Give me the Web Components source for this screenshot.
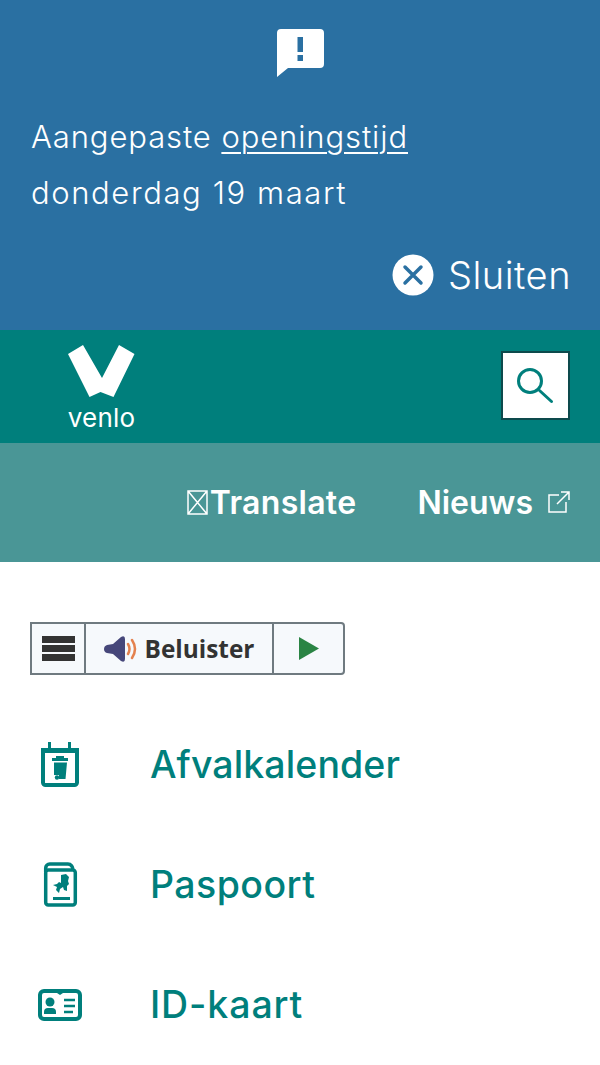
<!DOCTYPE html>
<html lang="nl">
<head>
<meta charset="utf-8">
<title>Venlo</title>
<style>
    html, body { margin: 0; padding: 0; background: #fff; }
    body { font-family: Inter, "Liberation Sans", sans-serif; width: 600px; height: 1065px; overflow: hidden; }
</style>
</head>
<body>
<venlo-alert>
    <a href="#">openingstijd</a>
</venlo-alert>
<venlo-header></venlo-header>
<venlo-nav></venlo-nav>
<venlo-readspeaker></venlo-readspeaker>
<venlo-tasks>
    <venlo-task label="Afvalkalender" icon="afval" tracking=".1"></venlo-task>
    <venlo-task label="Paspoort" icon="paspoort" tracking=".45"></venlo-task>
    <venlo-task label="ID-kaart" icon="id" tracking=".9"></venlo-task>
</venlo-tasks>

<script>
class VenloAlert extends HTMLElement {
    constructor() {
        super();
        this.attachShadow({mode: "open"});
        this.shadowRoot.innerHTML = `
            <style>
                :host { display: flex; flex-direction: column; height: 330px; box-sizing: border-box; padding: 29px 30px 0 31px; background: #2a70a2; color: #fff; }
                .icon { align-self: center; width: 50px; height: 50px; display: block; }
                p { margin: 30px 0 0; font-size: 31px; line-height: 56px; font-weight: 350; letter-spacing: .9px; }
                .second { letter-spacing: 1.6px; }
                ::slotted(a) { color: #fff; text-decoration: underline; text-underline-offset: 4px; text-decoration-thickness: 2px; }
                .close { display: flex; align-items: center; justify-content: flex-end; gap: 14px; margin-top: 33px; margin-right: -1px; font-size: 38px; line-height: 42px; font-weight: 350; letter-spacing: .5px; }
                .close svg { width: 42px; height: 42px; display: block; }
            </style>
            <svg class="icon" viewBox="0 0 50 50">
                <path fill="#fff" d="M5 0h39a4 4 0 0 1 4 4v31a4 4 0 0 1-4 4H12L1 48V4a4 4 0 0 1 4-4z"/>
                <rect x="21.500" y="8" width="5.500" height="15" fill="#2a70a2"/>
                <rect x="21.500" y="26" width="5.500" height="6" fill="#2a70a2"/>
            </svg>
            <p>Aangepaste <slot></slot><br><span class="second">donderdag 19 maart</span></p>
            <div class="close">
                <svg viewBox="0 0 42 42">
                    <circle cx="21" cy="21" r="20.500" fill="#fff"/>
                    <path d="M13 13l16 16M29 13L13 29" stroke="#2a70a2" stroke-width="3.500" stroke-linecap="round"/>
                </svg>
                <span>Sluiten</span>
            </div>
        `;
    }
}
customElements.define('venlo-alert', VenloAlert);

class VenloHeader extends HTMLElement {
    constructor() {
        super();
        this.attachShadow({mode: "open"});
        this.shadowRoot.innerHTML = `
            <style>
                :host { display: flex; align-items: flex-start; justify-content: space-between; height: 113px; box-sizing: border-box; padding: 15px 30px 0 67px; background: #007f7c; color: #fff; }
                .logo { display: flex; flex-direction: column; align-items: center; width: 69px; }
                .logo svg { width: 69px; height: 53px; display: block; }
                .logo span { font-size: 26px; line-height: 28px; margin-top: 6px; letter-spacing: .2px; font-weight: 400; }
                button { width: 69px; height: 69px; margin-top: 6px; padding: 0; box-sizing: border-box; background: #fff; border: 2px solid #0d4a4c; display: flex; align-items: center; justify-content: center; }
                button svg { width: 38px; height: 38px; display: block; }
            </style>
            <div class="logo">
                <svg viewBox="0 0 69 53">
                    <path fill="#fff" d="M1 9L16 0l19 33L52 0l15.500 9-21 43-13-5-11 5z"/>
                </svg>
                <span>venlo</span>
            </div>
            <button aria-label="Zoeken">
                <svg viewBox="0 0 38 38" fill="none" stroke="#007f7c" stroke-width="3" stroke-linecap="round">
                    <circle cx="13" cy="14" r="11.500"/>
                    <path d="M22.500 23.500l12 11"/>
                </svg>
            </button>
        `;
    }
}
customElements.define('venlo-header', VenloHeader);

class VenloNav extends HTMLElement {
    constructor() {
        super();
        this.attachShadow({mode: "open"});
        this.shadowRoot.innerHTML = `
            <style>
                :host { display: flex; align-items: center; justify-content: flex-end; height: 119px; box-sizing: border-box; padding: 0 30px 1px 0; background: #4a9696; color: #fff; font-size: 32px; font-weight: 600; }
                .item { display: flex; align-items: center; }
                .item + .item { margin-left: 61px; }
                .translate { letter-spacing: .3px; }
                .tofu { width: 21px; height: 25px; display: block; margin-right: 2px; }
                .ext { width: 22px; height: 22px; display: block; margin-left: 15px; }
            </style>
            <div class="item translate">
                <svg class="tofu" viewBox="0 0 21 25" fill="none" stroke="#fff" stroke-width="1.500"><path d="M1 1h19v23H1zM1 1l19 23M20 1L1 24"/></svg>
                <span>Translate</span>
            </div>
            <div class="item">
                <span>Nieuws</span>
                <svg class="ext" viewBox="0 0 22 22" fill="none" stroke="#fff" stroke-width="1.500"><path d="M11 4H1v17h17V11M9 13L21 1M13 1h8v8"/></svg>
            </div>
        `;
    }
}
customElements.define('venlo-nav', VenloNav);

class VenloReadspeaker extends HTMLElement {
    constructor() {
        super();
        this.attachShadow({mode: "open"});
        this.shadowRoot.innerHTML = `
            <style>
                :host { display: flex; width: 315px; height: 53px; box-sizing: border-box; margin: 60px 0 0 30px; background: #f6f9fc; border: 2px solid #6f7a80; border-radius: 0 4px 4px 0; color: #333; font-family: "Open Sans", sans-serif; }
                .cell { display: flex; align-items: center; justify-content: center; box-sizing: border-box; }
                .cell + .cell { border-left: 2px solid #6f7a80; }
                .menu { width: 52px; }
                .listen { width: 188px; font-size: 24.400px; font-weight: 700; gap: 8px; }
                .play { flex: 1; }
                svg { display: block; }
            </style>
            <div class="cell menu">
                <svg width="33" height="25" viewBox="0 0 33 25" fill="#333"><rect width="33" height="7"/><rect y="9" width="33" height="7"/><rect y="18" width="33" height="7"/></svg>
            </div>
            <div class="cell listen">
                <svg width="33" height="26" viewBox="0 0 33 26" fill="none">
                    <path fill="#46477a" d="M0 13q0-3 3-4l6-1 8-7q4-2 4 2v20q0 4-4 2l-8-7-6-1q-3-1-3-4z"/>
                    <path stroke="#e4814e" stroke-width="2.500" stroke-linecap="round" d="M24 8q3 5 0 10M28 4q6 9 0 18"/>
                </svg>
                <span>Beluister</span>
            </div>
            <div class="cell play">
                <svg width="20" height="23" viewBox="0 0 20 23"><path fill="#2a8444" d="M0 0l20 11.500L0 23z"/></svg>
            </div>
        `;
    }
}
customElements.define('venlo-readspeaker', VenloReadspeaker);

class VenloTasks extends HTMLElement {
    constructor() {
        super();
        this.attachShadow({mode: "open"});
        this.shadowRoot.innerHTML = `
            <style>
                :host { display: block; margin-top: 30px; }
            </style>
            <slot></slot>
        `;
    }
}
customElements.define('venlo-tasks', VenloTasks);

const TASK_ICONS = {
    afval: `<svg width="60" height="60" viewBox="0 0 60 60">
        <rect x="13" y="15" width="34" height="35" rx="2.500" fill="none" stroke="#007f7c" stroke-width="4"/>
        <path fill="#007f7c" d="M11 13h38v5H11zM18 7h3v8h-3zM38 7h3v8h-3z"/>
        <path fill="#007f7c" d="M26 21h8v2h-8zM22 23h16v3H22zM24 27.500h13l-1.500 16.500H29v-4h-5z"/>
        <circle cx="27" cy="42.500" r="2.200" fill="#007f7c"/>
    </svg>`,
    paspoort: `<svg width="60" height="60" viewBox="0 0 60 60" fill="none" stroke="#007f7c" stroke-width="3.500">
        <path d="M15.700 17v-4a4 4 0 0 1 4-4h18a5 5 0 0 1 5 6"/>
        <rect x="15.700" y="15" width="29.600" height="35" rx="2.500"/>
        <path fill="#007f7c" stroke="none" d="M31 20l5-1 3 3-1 4 1 3-2 2 0 5-3-1-1-3-3 2-1 4-3-3 1-3-4-2 4-1 2-2 2 1 0-4z"/>
        <path d="M23 43.500h17" stroke-width="3"/>
    </svg>`,
    id: `<svg width="60" height="60" viewBox="0 0 60 60" fill="none" stroke="#007f7c">
        <rect x="10" y="16" width="40" height="28" rx="4" stroke-width="4"/>
        <path fill="#007f7c" stroke="none" d="M27 16h6v2l-3 2-3-2z"/>
        <circle cx="20" cy="27" r="4.500" fill="#007f7c" stroke="none"/>
        <path fill="#007f7c" stroke="none" d="M14 39v-2a4 4 0 0 1 4-4h4a4 4 0 0 1 4 4v2z"/>
        <path stroke-width="2.500" d="M34 25h11M34 31h11M34 37h9"/>
    </svg>`
};

class VenloTask extends HTMLElement {
    constructor() {
        super();
        this.attachShadow({mode: "open"});
    }

    connectedCallback() {
        this.shadowRoot.innerHTML = `
            <style>
                :host { display: flex; align-items: center; height: 120px; padding-left: 30px; color: #007f7c; font-size: 37.500px; font-weight: 500; letter-spacing: ${this.getAttribute('tracking')}px; }
                .icon { width: 60px; height: 60px; margin-right: 60px; flex: none; }
                span { position: relative; top: -1px; }
                svg { display: block; }
            </style>
            <div class="icon">${TASK_ICONS[this.getAttribute('icon')]}</div>
            <span>${this.getAttribute('label')}</span>
        `;
    }
}
customElements.define('venlo-task', VenloTask);
</script>
</body>
</html>
